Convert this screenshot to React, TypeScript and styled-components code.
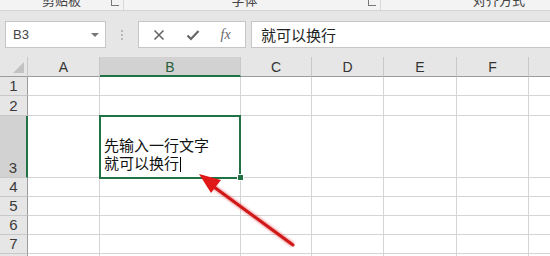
import React from "react";
import styled, { createGlobalStyle } from "styled-components";

const Global = createGlobalStyle`
  html, body { margin: 0; padding: 0; }
  body {
    width: 550px; height: 256px; overflow: hidden;
    background: #e6e6e6;
    font-family: "Liberation Sans", "Noto Sans CJK SC", sans-serif;
  }
`;

const Page = styled.div`
  width: 550px;
  height: 256px;
  position: relative;
  overflow: hidden;
  background: #e6e6e6;
`;

const RibbonLabels = styled.div`
  height: 10px;
  background: #f3f3f3;
  border-bottom: 1px solid #d4d4d4;
  display: flex;
  overflow: hidden;
  font-family: "Noto Sans CJK SC", sans-serif;
  font-size: 13px;
  color: #444;
`;

const RibbonGroup = styled.div<{ $w: number; $edge?: boolean }>`
  width: ${(p) => p.$w}px;
  flex: none;
  display: flex;
  align-items: flex-start;
  justify-content: center;
  position: relative;
  border-right: ${(p) => (p.$edge ? "1px solid #d8d8d8" : "none")};
  height: 10px;
`;

const GroupLabel = styled.span`
  margin-top: -9px;
  line-height: 18px;
`;

const Launcher = styled.span`
  position: absolute;
  right: 4px;
  top: -2px;
  width: 7px;
  height: 7px;
  border-left: 1px solid #777;
  border-bottom: 1px solid #777;
`;

const FormulaBar = styled.div`
  height: 27px;
  margin-top: 10px;
  display: flex;
  align-items: stretch;
  padding-left: 5px;
`;

const NameBox = styled.div`
  width: 101px;
  box-sizing: border-box;
  background: #fff;
  border: 1px solid #c6c6c6;
  display: flex;
  align-items: center;
  padding-left: 7px;
  padding-right: 6px;
  font-size: 13px;
  color: #444;
  justify-content: space-between;
`;

const DropArrow = styled.span`
  width: 0;
  height: 0;
  border-left: 4px solid transparent;
  border-right: 4px solid transparent;
  border-top: 4px solid #777;
`;

const Dots = styled.div`
  width: 32px;
  display: flex;
  flex-direction: column;
  align-items: center;
  justify-content: center;
  gap: 2px;
  & > span { width: 2px; height: 2px; background: #b8b8b8; }
`;

const ButtonBox = styled.div`
  width: 108px;
  box-sizing: border-box;
  background: #fff;
  border: 1px solid #c6c6c6;
  display: flex;
  align-items: center;
  justify-content: space-around;
  padding: 0 4px;
`;

const Fx = styled.span`
  font-family: "Liberation Serif", serif;
  font-style: italic;
  font-size: 14px;
  color: #666;
`;

const FormulaInput = styled.div`
  flex: 1;
  margin-left: 5px;
  background: #fff;
  border: 1px solid #c6c6c6;
  border-right: none;
  display: flex;
  align-items: center;
  padding-left: 9px;
  font-family: "Noto Sans CJK SC", sans-serif;
  font-size: 15px;
  color: #222;
`;

const Sheet = styled.div`
  margin-top: 9px;
  display: grid;
  grid-template-columns: 28px 72px 141px 71px 72px 73px 72px 72px;
  grid-template-rows: 20px 19px 20px 62px 19px 19px 19px 19px 19px;
  background: #fff;
  position: relative;
`;

const ColHead = styled.div<{ $sel?: boolean }>`
  box-sizing: border-box;
  background: ${(p) => (p.$sel ? "#d2d2d2" : "#e6e6e6")};
  border-right: 1px solid #c8c8c8;
  border-bottom: ${(p) => (p.$sel ? "2px solid #217346" : "1px solid #9b9b9b")};
  display: flex;
  align-items: center;
  justify-content: center;
  font-size: 14px;
  color: ${(p) => (p.$sel ? "#2a5e3c" : "#333")};
  padding-top: 1px;
`;

const Corner = styled.div`
  box-sizing: border-box;
  background: #e6e6e6;
  border-right: 1px solid #c8c8c8;
  border-bottom: 1px solid #9b9b9b;
  position: relative;
  &::after {
    content: "";
    position: absolute;
    right: 3px;
    bottom: 3px;
    border-left: 11px solid transparent;
    border-bottom: 11px solid #c2c2c2;
  }
`;

const RowHead = styled.div<{ $sel?: boolean }>`
  box-sizing: border-box;
  background: ${(p) => (p.$sel ? "#d2d2d2" : "#e6e6e6")};
  border-right: ${(p) => (p.$sel ? "2px solid #217346" : "1px solid #9b9b9b")};
  border-bottom: 1px solid #c8c8c8;
  display: flex;
  align-items: flex-end;
  justify-content: center;
  font-size: 15px;
  line-height: 18px;
  color: #3a3a3a;
`;

const Cell = styled.div`
  box-sizing: border-box;
  border-right: 1px solid #d4d4d4;
  border-bottom: 1px solid #d4d4d4;
  background: #fff;
`;

const ActiveCell = styled.div`
  box-sizing: border-box;
  position: relative;
  background: #fff;
  display: flex;
  flex-direction: column;
  justify-content: flex-end;
  padding: 0 0 6px 4px;
  font-family: "Noto Sans CJK SC", sans-serif;
  font-size: 15px;
  line-height: 18px;
  color: #111;
  &::after {
    content: "";
    position: absolute;
    left: -1px;
    top: -1px;
    right: 0;
    bottom: -1px;
    border: 2px solid #217346;
  }
`;

const Handle = styled.span`
  position: absolute;
  right: -3px;
  bottom: -3px;
  width: 5px;
  height: 5px;
  background: #217346;
  border: 1px solid #fff;
  z-index: 2;
`;

const Caret = styled.span`
  display: inline-block;
  width: 1px;
  height: 15px;
  background: #000;
  vertical-align: -3px;
  margin-left: 1px;
`;

const ArrowLayer = styled.svg`
  position: absolute;
  left: 0;
  top: 0;
  pointer-events: none;
`;

const cols = ["A", "B", "C", "D", "E", "F", "G"];
const rows = [1, 2, 3, 4, 5, 6, 7, 8];

export default function App() {
  return (
    <Page>
      <Global />
      <RibbonLabels>
        <RibbonGroup $w={123} $edge>
          <GroupLabel>剪贴板</GroupLabel>
          <Launcher />
        </RibbonGroup>
        <RibbonGroup $w={241}>
          <GroupLabel>字体</GroupLabel>
        </RibbonGroup>
        <RibbonGroup $w={15} $edge>
          <Launcher />
        </RibbonGroup>
        <RibbonGroup $w={236}>
          <GroupLabel>对齐方式</GroupLabel>
        </RibbonGroup>
      </RibbonLabels>
      <FormulaBar>
        <NameBox>
          <span>B3</span>
          <DropArrow />
        </NameBox>
        <Dots>
          <span />
          <span />
          <span />
        </Dots>
        <ButtonBox>
          <svg width="12" height="12" viewBox="0 0 12 12">
            <path d="M1.5 1.5 L10.5 10.5 M10.5 1.5 L1.5 10.5" stroke="#666" strokeWidth="1.6" fill="none" />
          </svg>
          <svg width="14" height="12" viewBox="0 0 14 12">
            <path d="M1.5 6.5 L5 10 L12.5 2" stroke="#666" strokeWidth="2.2" fill="none" />
          </svg>
          <Fx>fx</Fx>
        </ButtonBox>
        <FormulaInput>就可以换行</FormulaInput>
      </FormulaBar>
      <Sheet>
        <Corner />
        {cols.map((c) => (
          <ColHead key={c} $sel={c === "B"}>
            {c}
          </ColHead>
        ))}
        {rows.map((r) => (
          <React.Fragment key={r}>
            <RowHead $sel={r === 3}>{r}</RowHead>
            {cols.map((c) =>
              r === 3 && c === "B" ? (
                <ActiveCell key={c}>
                  <div>先输入一行文字</div>
                  <div>
                    就可以换行
                    <Caret />
                  </div>
                  <Handle />
                </ActiveCell>
              ) : (
                <Cell key={c} />
              )
            )}
          </React.Fragment>
        ))}
      </Sheet>
      <ArrowLayer width="550" height="256" viewBox="0 0 550 256">
        <defs>
          <filter id="sh" x="-20%" y="-20%" width="140%" height="140%">
            <feGaussianBlur stdDeviation="1.2" />
          </filter>
        </defs>
        <g filter="url(#sh)" opacity="0.5">
          <line x1="293" y1="245" x2="214" y2="187" stroke="#e04040" strokeWidth="5" />
        </g>
        <line x1="293" y1="245" x2="214" y2="187" stroke="#d01818" strokeWidth="3" strokeLinecap="round" />
        <polygon points="199,174 221,180 211,193" fill="#e01818" />
      </ArrowLayer>
    </Page>
  );
}
